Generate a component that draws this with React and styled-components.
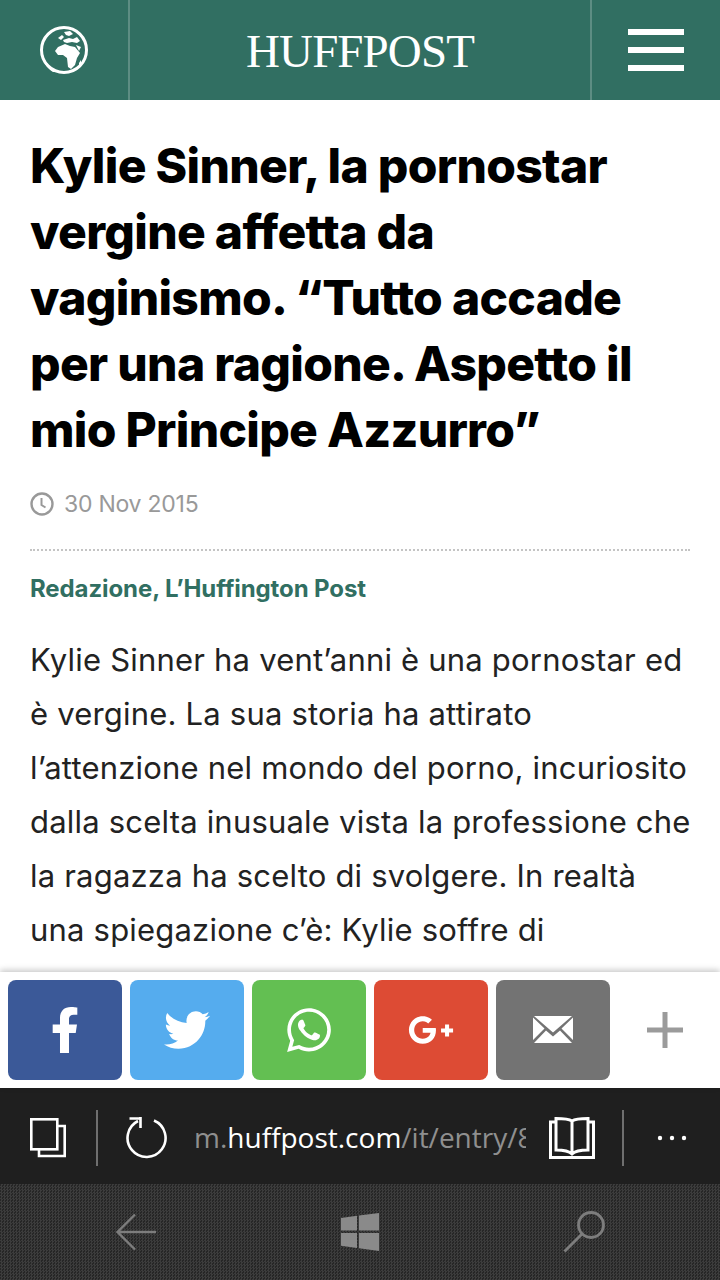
import React from 'react';
import styled, { createGlobalStyle } from 'styled-components';
import { FaFacebookF, FaTwitter, FaWhatsapp, FaGooglePlusG } from 'react-icons/fa';

const GlobalStyle = createGlobalStyle`
  html, body { margin: 0; padding: 0; background: #fff; }
  * { box-sizing: border-box; }
`;

const Page = styled.div`
  width: 720px;
  height: 1280px;
  display: flex;
  flex-direction: column;
  overflow: hidden;
  font-family: Inter, "Liberation Sans", sans-serif;
`;

const Header = styled.header`
  flex: none;
  height: 100px;
  display: grid;
  grid-template-columns: 130px 1fr 130px;
  background: #316f62;
`;

const HeaderCell = styled.div`
  display: flex;
  align-items: center;
  justify-content: center;
  border-left: ${p => (p.$left ? '2px solid #5d8d83' : 'none')};
  border-right: ${p => (p.$right ? '2px solid #5d8d83' : 'none')};
`;

const Logo = styled.div`
  font-family: "Liberation Serif", serif;
  font-size: 47px;
  letter-spacing: -0.9px;
  color: #fff;
  padding-top: 1px;
`;

const Burger = styled.div`
  width: 56px;
  display: flex;
  flex-direction: column;
  gap: 12px;
`;

const BurgerLine = styled.span`
  display: block;
  height: 6px;
  background: #fff;
`;

const Article = styled.main`
  flex: 1;
  min-height: 0;
  overflow: hidden;
  padding: 33px 30px 0;
`;

const Title = styled.h1`
  margin: 0;
  font-size: 48px;
  line-height: 66px;
  font-weight: 800;
  letter-spacing: -0.7px;
  color: #000;
`;

const DateRow = styled.div`
  display: flex;
  align-items: center;
  gap: 10px;
  margin-top: 24px;
  height: 34px;
  font-size: 23px;
  letter-spacing: -0.25px;
  color: #999;
`;

const Divider = styled.hr`
  margin: 28px 0 0;
  border: none;
  border-top: 2px dotted #c4c4c4;
`;

const Author = styled.div`
  margin-top: 20px;
  font-size: 24px;
  line-height: 36px;
  font-weight: 700;
  letter-spacing: -0.1px;
  color: #316f62;
`;

const Body = styled.p`
  margin: 26px 0 0;
  font-size: 31px;
  line-height: 54px;
  letter-spacing: 0.2px;
  white-space: nowrap;
  color: #222;
`;

const ShareBar = styled.div`
  flex: none;
  height: 116px;
  display: flex;
  gap: 8px;
  padding: 8px;
  background: #fff;
  box-shadow: 0 -2px 6px rgba(0, 0, 0, 0.22);
  position: relative;
`;

const ShareButton = styled.div`
  width: 114px;
  height: 100px;
  border-radius: 8px;
  display: flex;
  align-items: center;
  justify-content: center;
  color: #fff;
  background: ${p => p.$color};
  font-size: ${p => p.$size}px;
`;

const MoreButton = styled.div`
  flex: 1;
  display: flex;
  align-items: center;
  justify-content: center;
`;

const BrowserBar = styled.div`
  flex: none;
  height: 96px;
  padding-top: 4px;
  background: #1f1f1f;
  display: flex;
  align-items: center;
`;

const BarIcon = styled.div`
  flex: none;
  width: ${p => p.$w}px;
  padding-right: ${p => p.$pr || 0}px;
  display: flex;
  align-items: center;
  justify-content: center;
`;

const BarRule = styled.span`
  flex: none;
  width: 2px;
  height: 56px;
  background: #6f6f6f;
`;

const Url = styled.div`
  width: 332px;
  flex: none;
  overflow: hidden;
  white-space: nowrap;
  font-family: "Open Sans", "Noto Sans", sans-serif;
  font-size: 28px;
  margin-top: -2px;
  color: #8f8f8f;
`;

const UrlHost = styled.span`
  color: #fff;
`;

const NavBar = styled.nav`
  flex: none;
  height: 96px;
  display: grid;
  grid-template-columns: 272px 176px 272px;
  background-color: #2e2e2e;
  background-image: conic-gradient(#3c3c3c 25%, #262626 0 50%, #3c3c3c 0 75%, #262626 0);
  background-size: 3px 3px;
`;

const NavCell = styled.div`
  display: flex;
  align-items: center;
  justify-content: center;
`;

const Globe = () => (
  <svg width="50" height="50" viewBox="0 0 50 50">
    <circle cx="25" cy="25" r="22.500" fill="#316f62" stroke="#fff" strokeWidth="3" />
    <path fill="#fff" d="M16 26L19 22 26 19 31 21 36 22 41 28 38 33 36 40 32 44 29 42 28 33 24 30 19 30Z" />
    <path fill="#fff" d="M19 13L23 10 25 12 22 15Z" />
    <path fill="#fff" d="M25 7L31 6 34 9 30 11 27 10Z" />
    <path fill="#fff" d="M24 15L30 13 34 14 38 12 41 16 38 18 33 17 28 18 25 17Z" />
    <path fill="#fff" d="M37 20L42 22 40 26Z" />
    <path fill="#fff" d="M40 38L42 35 42 39 40 42Z" />
    <path fill="#fff" d="M4 30C6 38 12 44 20 47L14 47C8 43 4 37 3 30Z" />
  </svg>
);

const ClockIcon = () => (
  <svg width="24" height="24" viewBox="0 0 24 24" fill="none" stroke="#999" strokeWidth="2.4">
    <circle cx="12" cy="12" r="10.5" />
    <path d="M11.5 6v7l4 2.5" strokeWidth="2" />
  </svg>
);

const MailIcon = () => (
  <svg width="40" height="28" viewBox="0 0 40 28">
    <path fill="#fff" d="M1 0h38L20 16.5zM0 1.5l11.5 11L0 24zM40 1.5v22.500L28.500 12.500zM1 27l12-12.500 7 6 7-6L39 27z" />
  </svg>
);

const PlusIcon = () => (
  <svg width="36" height="36" viewBox="0 0 36 36">
    <path fill="#9b9b9b" d="M15.500 0h5v15.500H36v5H20.500V36h-5V20.500H0v-5h15.500z" />
  </svg>
);

const TabsIcon = () => (
  <svg width="36" height="40" viewBox="0 0 36 40" fill="none" stroke="#fff" strokeWidth="2.6">
    <rect x="1.300" y="1.300" width="26" height="30" />
    <path d="M27 8h7.700v30H9V32" />
  </svg>
);

const ReloadIcon = () => (
  <svg width="42" height="42" viewBox="0 0 42 42" fill="none" stroke="#fff" strokeWidth="2.6">
    <path d="M29 3.500A19 19 0 1 1 13 4" />
    <path d="M13 0.500h1.500V11M3.500 1.500H15" transform="translate(1 0)" />
  </svg>
);

const BookIcon = () => (
  <svg width="46" height="42" viewBox="0 0 46 42" fill="none" stroke="#fff" strokeWidth="3">
    <path d="M6 5H1.500V40.500H44.500V5H40" />
    <path d="M23 36V4C20 2 12 1.500 7 1.500V33C12 33 20 34 23 37C26 34 34 33 39 33V1.500C34 1.500 26 2 23 4" />
  </svg>
);

const DotsIcon = () => (
  <svg width="30" height="6" viewBox="0 0 30 6">
    <circle cx="3" cy="3" r="2.200" fill="#fff" />
    <circle cx="15" cy="3" r="2.200" fill="#fff" />
    <circle cx="27" cy="3" r="2.200" fill="#fff" />
  </svg>
);

const BackIcon = () => (
  <svg width="42" height="38" viewBox="0 0 42 38" fill="none" stroke="#7d7d7d" strokeWidth="2.400">
    <path d="M20 1.500L2.500 19 20 36.500M2.500 19H41" />
  </svg>
);

const WindowsIcon = () => (
  <svg width="38" height="38" viewBox="0 0 38 38">
    <path fill="#8a8a8a" d="M0 5l16-2.200V17.500H0zM18 2.500L38 0v17.500H18zM0 20h16v15L0 32.800zM18 20h20v18l-20-2.700z" />
  </svg>
);

const SearchIcon = () => (
  <svg width="42" height="42" viewBox="0 0 42 42" fill="none" stroke="#7d7d7d" strokeWidth="2.800">
    <circle cx="28" cy="14" r="12.500" />
    <path d="M19 23L1.500 40.500" />
  </svg>
);

const shares = [
  { color: '#3b5998', size: 46, Icon: FaFacebookF },
  { color: '#55acee', size: 46, Icon: FaTwitter },
  { color: '#63bf52', size: 50, Icon: FaWhatsapp },
  { color: '#dd4b34', size: 46, Icon: FaGooglePlusG },
  { color: '#737373', Icon: MailIcon },
];

export default function App() {
  return (
    <Page>
      <GlobalStyle />
      <Header>
        <HeaderCell $right><Globe /></HeaderCell>
        <HeaderCell><Logo>HUFFPOST</Logo></HeaderCell>
        <HeaderCell $left>
          <Burger>
            <BurgerLine />
            <BurgerLine />
            <BurgerLine />
          </Burger>
        </HeaderCell>
      </Header>
      <Article>
        <Title>
          Kylie Sinner, la pornostar<br />
          vergine affetta da<br />
          vaginismo. “Tutto accade<br />
          per una ragione. Aspetto il<br />
          mio Principe Azzurro”
        </Title>
        <DateRow><ClockIcon />30 Nov 2015</DateRow>
        <Divider />
        <Author>Redazione, L’Huffington Post</Author>
        <Body>
          Kylie Sinner ha vent’anni è una pornostar ed<br />
          è vergine. La sua storia ha attirato<br />
          l’attenzione nel mondo del porno, incuriosito<br />
          dalla scelta inusuale vista la professione che<br />
          la ragazza ha scelto di svolgere. In realtà<br />
          una spiegazione c’è: Kylie soffre di
        </Body>
      </Article>
      <ShareBar>
        {shares.map(({ color, size, Icon }) => (
          <ShareButton key={color} $color={color} $size={size}><Icon /></ShareButton>
        ))}
        <MoreButton><PlusIcon /></MoreButton>
      </ShareBar>
      <BrowserBar>
        <BarIcon $w={96}><TabsIcon /></BarIcon>
        <BarRule />
        <BarIcon $w={96}><ReloadIcon /></BarIcon>
        <Url>m.<UrlHost>huffpost.com</UrlHost>/it/entry/8</Url>
        <BarIcon $w={96} $pr={4}><BookIcon /></BarIcon>
        <BarRule />
        <BarIcon $w={96}><DotsIcon /></BarIcon>
      </BrowserBar>
      <NavBar>
        <NavCell><BackIcon /></NavCell>
        <NavCell><WindowsIcon /></NavCell>
        <NavCell><SearchIcon /></NavCell>
      </NavBar>
    </Page>
  );
}
